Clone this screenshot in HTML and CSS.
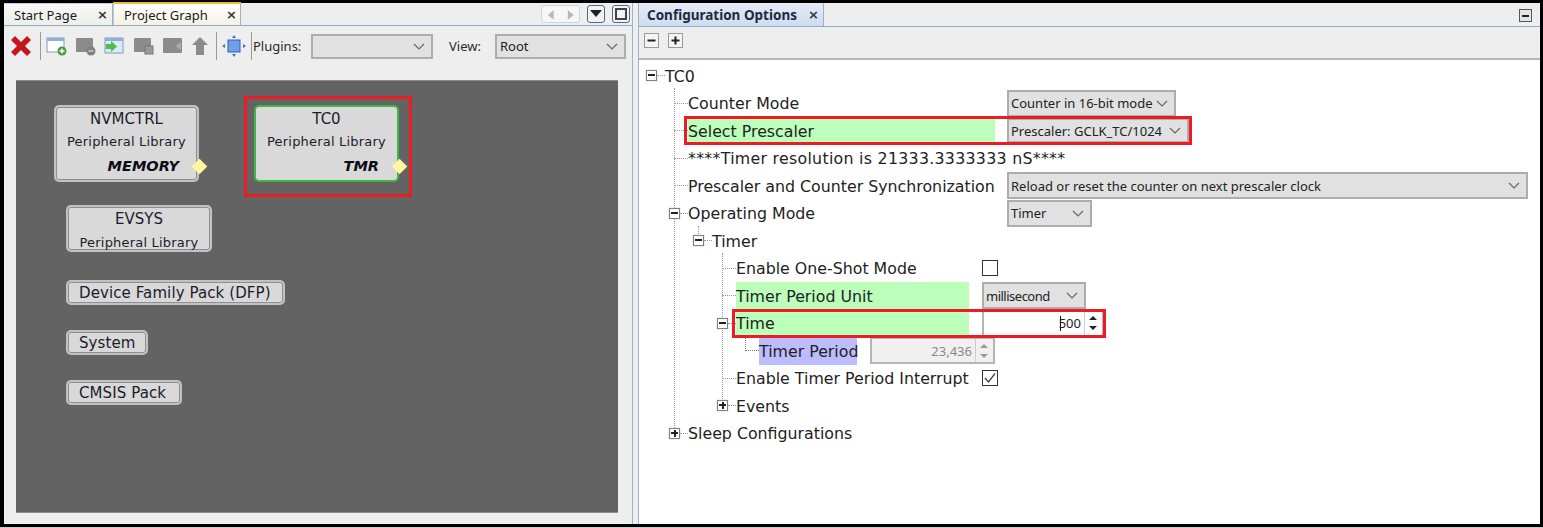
FILE: index.html
```html
<!DOCTYPE html>
<html lang="en">
<head>
  <meta charset="UTF-8">
  <title>Project Graph</title>
  <link rel="stylesheet" href="styles.css">
</head>
<body>
<div class="frame">

  <!-- left pane -->
  <section class="pane pane_left">
    <div class="tabbar">
      <div class="tab tab_start"><span>Start Page</span><b class="tab_x">×</b></div>
      <div class="tab tab_active"><span>Project Graph</span><b class="tab_x">×</b></div>
      <div class="tab_tools">
        <div class="nav_pair">
          <svg width="19" height="18" viewBox="0 0 19 18"><path d="M12 4v10l-6-5z" fill="#b4b8bd"/></svg>
          <svg width="19" height="18" viewBox="0 0 19 18"><path d="M7 4v10l6-5z" fill="#b4b8bd"/></svg>
        </div>
        <div class="win_btn"><svg width="12" height="8" viewBox="0 0 12 8"><path d="M0 0h12L6 7z" fill="#222"/></svg></div>
        <div class="win_btn"><svg width="12" height="12" viewBox="0 0 12 12"><rect x="1" y="1" width="10" height="10" fill="none" stroke="#444" stroke-width="2"/></svg></div>
      </div>
    </div>

    <div class="toolbar">
      <svg class="ico ico_x" width="24" height="24" viewBox="0 0 24 24"><path d="M2 6l4-4 6 6 6-6 4 4-6 6 6 6-4 4-6-6-6 6-4-4 6-6z" fill="#c4161c"/></svg>
      <i class="sep sep_a"></i>
      <svg class="ico" width="21" height="20" viewBox="0 0 21 20"><rect x="1" y="2" width="17" height="14" fill="#fff" stroke="#7a9cc8"/><rect x="1" y="2" width="17" height="3" fill="#8fb0dc"/><circle cx="16" cy="15" r="4.5" fill="#4f9a3c"/><path d="M13.5 15h5M16 12.500v5" stroke="#fff" stroke-width="1.500"/></svg>
      <svg class="ico" width="21" height="20" viewBox="0 0 21 20"><rect x="1" y="2" width="17" height="14" rx="1" fill="#8b8b8b"/><circle cx="16" cy="15" r="4.500" fill="#808080"/><path d="M13.500 15h5" stroke="#ccc" stroke-width="1.500"/></svg>
      <svg class="ico" width="21" height="20" viewBox="0 0 21 20"><rect x="1" y="2" width="18" height="15" fill="#dce9f8" stroke="#7a9cc8"/><rect x="1" y="2" width="18" height="3" fill="#8fb0dc"/><path d="M2 8h5V5l6 5.500L7 16v-3H2z" fill="#54b948"/></svg>
      <svg class="ico" width="21" height="20" viewBox="0 0 21 20"><rect x="1" y="2" width="17" height="14" rx="1" fill="#8b8b8b"/><rect x="12" y="10" width="8" height="8" fill="#999" stroke="#777"/></svg>
      <svg class="ico" width="21" height="20" viewBox="0 0 21 20"><rect x="1" y="2" width="19" height="15" rx="1" fill="#8b8b8b"/><path d="M19 6l-6 4 6 4" fill="#aaa"/></svg>
      <svg class="ico" width="18" height="20" viewBox="0 0 18 20"><path d="M9 1l8 8h-4v10H5V9H1z" fill="#8b8b8b"/></svg>
      <i class="sep sep_b"></i>
      <svg class="ico ico_fit" width="24" height="22" viewBox="0 0 24 22"><rect x="6" y="5" width="12" height="12" fill="#6f9fe8" stroke="#2f62b8"/><path d="M12 0l2 3h-4zM12 22l2-3h-4zM0 11l3-2v4zM24 11l-3-2v4z" fill="#3d74c9"/></svg>
      <i class="sep sep_c"></i>
      <label class="tool_label">Plugins:</label>
      <div class="combo combo_plugins"><span></span><svg width="12" height="7" viewBox="0 0 12 7"><path d="M1 1l5 5 5-5" fill="none" stroke="#666" stroke-width="1.200"/></svg></div>
      <label class="tool_label label_view">View:</label>
      <div class="combo combo_view"><span>Root</span><svg width="12" height="7" viewBox="0 0 12 7"><path d="M1 1l5 5 5-5" fill="none" stroke="#666" stroke-width="1.200"/></svg></div>
    </div>

    <!-- nodes sit freely on the graph canvas -->
    <div class="canvas">
      <div class="gnode gnode_big n_nvm">
        <p class="g_title">NVMCTRL</p><p class="g_sub">Peripheral Library</p><p class="g_tag">MEMORY</p><i class="port"></i>
      </div>
      <div class="gnode gnode_big n_tc0">
        <p class="g_title">TC0</p><p class="g_sub">Peripheral Library</p><p class="g_tag">TMR</p><i class="port"></i>
      </div>
      <div class="gnode n_evsys"><p class="g_title">EVSYS</p><p class="g_sub">Peripheral Library</p></div>
      <div class="gnode gnode_one n_dfp">Device Family Pack (DFP)</div>
      <div class="gnode gnode_one n_sys">System</div>
      <div class="gnode gnode_one n_cmsis">CMSIS Pack</div>
      <div class="red_box box_tc0"></div>
    </div>
  </section>

  <!-- right pane -->
  <section class="pane pane_right">
    <div class="tabbar tabbar_right">
      <div class="tab tab_config"><span>Configuration Options</span><b class="tab_x">×</b></div>
      <div class="min_btn"><i></i></div>
    </div>
    <div class="toolbar_right">
      <div class="tree_btn"><svg width="15" height="15" viewBox="0 0 15 15"><path d="M3.500 7.500h8" stroke="#222" stroke-width="2"/></svg></div>
      <div class="tree_btn"><svg width="15" height="15" viewBox="0 0 15 15"><path d="M3.500 7.500h8M7.500 3.500v8" stroke="#222" stroke-width="2"/></svg></div>
    </div>

    <div class="tree">
      <i class="guide guide_a"></i>
      <i class="guide guide_b"></i>
      <i class="guide guide_c"></i>

      <div class="row lv0"><span class="node"><i class="exp exp_minus"></i><i class="dash"></i></span><span class="text">TC0</span></div>

      <div class="row lv1"><span class="node"><i class="dash"></i></span><span class="label lab_wide">Counter Mode</span>
        <div class="combo tree_combo c_counter"><span>Counter in 16-bit mode</span><svg width="12" height="7" viewBox="0 0 12 7"><path d="M1 1l5 5 5-5" fill="none" stroke="#666" stroke-width="1.200"/></svg></div></div>

      <div class="row lv1"><span class="node"><i class="dash"></i></span><span class="label lab_wide hl_green">Select Prescaler</span>
        <div class="combo tree_combo c_presc"><span>Prescaler: GCLK_TC/1024</span><svg width="12" height="7" viewBox="0 0 12 7"><path d="M1 1l5 5 5-5" fill="none" stroke="#666" stroke-width="1.200"/></svg></div></div>

      <div class="row lv1"><span class="node"><i class="dash"></i></span><span class="text text_res">****Timer resolution is 21333.3333333 nS****</span></div>

      <div class="row lv1"><span class="node"><i class="dash"></i></span><span class="label lab_wide">Prescaler and Counter Synchronization</span>
        <div class="combo tree_combo c_reload"><span>Reload or reset the counter on next prescaler clock</span><svg width="12" height="7" viewBox="0 0 12 7"><path d="M1 1l5 5 5-5" fill="none" stroke="#666" stroke-width="1.200"/></svg></div></div>

      <div class="row lv1"><span class="node"><i class="exp exp_minus"></i><i class="dash"></i></span><span class="label lab_wide">Operating Mode</span>
        <div class="combo tree_combo c_timer"><span>Timer</span><svg width="12" height="7" viewBox="0 0 12 7"><path d="M1 1l5 5 5-5" fill="none" stroke="#666" stroke-width="1.200"/></svg></div></div>

      <div class="row lv2"><span class="node"><i class="exp exp_minus"></i><i class="dash"></i></span><span class="text">Timer</span></div>

      <div class="row lv3"><span class="node"><i class="dash"></i></span><span class="label lab_mid">Enable One-Shot Mode</span><i class="check"></i></div>

      <div class="row lv3"><span class="node"><i class="dash"></i></span><span class="label lab_mid hl_green">Timer Period Unit</span>
        <div class="combo tree_combo c_unit"><span>millisecond</span><svg width="12" height="7" viewBox="0 0 12 7"><path d="M1 1l5 5 5-5" fill="none" stroke="#666" stroke-width="1.200"/></svg></div></div>

      <div class="row lv3"><span class="node"><i class="exp exp_minus"></i><i class="dash"></i></span><span class="label lab_mid hl_green">Time</span>
        <div class="spin spin_time"><span class="spin_val"><i class="caret"></i>500</span>
          <span class="spin_btns"><svg width="16" height="10" viewBox="0 0 16 10"><path d="M8 3l4 4H4z" fill="#222"/></svg><svg width="16" height="10" viewBox="0 0 16 10"><path d="M8 7L4 3h8z" fill="#222"/></svg></span></div></div>

      <div class="row lv4"><span class="elbow"></span><span class="label lab_blue">Timer Period</span>
        <div class="spin spin_off"><span class="spin_val">23,436</span>
          <span class="spin_btns"><svg width="16" height="10" viewBox="0 0 16 10"><path d="M8 3l4 4H4z" fill="#999"/></svg><svg width="16" height="10" viewBox="0 0 16 10"><path d="M8 7L4 3h8z" fill="#999"/></svg></span></div></div>

      <div class="row lv3"><span class="node"><i class="dash"></i></span><span class="label lab_mid">Enable Timer Period Interrupt</span>
        <i class="check"><svg width="16" height="16" viewBox="0 0 16 16"><path d="M3 8l3.500 4L13 3.500" fill="none" stroke="#444" stroke-width="1.300"/></svg></i></div>

      <div class="row lv3"><span class="node"><i class="exp exp_plus"></i><i class="dash"></i></span><span class="text">Events</span></div>

      <div class="row lv1"><span class="node"><i class="exp exp_plus"></i><i class="dash"></i></span><span class="text">Sleep Configurations</span></div>

      <div class="red_box box_presc"></div>
      <div class="red_box box_time"></div>
    </div>
  </section>

</div>
</body>
</html>
```

FILE: styles.css
```css
*{
  box-sizing:border-box;
}

body,p{
  margin:0px; padding:0px;
}

body{
  width:1543px; height:528px; overflow:hidden; background:#000; color:#1a1a1a;
  border-bottom:1px solid #c3ccd6;
  font-family:"DejaVu Sans",sans-serif;
}

.frame{
  display:flex; height:521px; margin:3px 3px 0px 4px; background:#eeeeee;
}

.pane{
  display:flex; flex-direction:column; background:#eeeeee;
}

.pane_left{
  width:629px; border-right:1px solid #9fb2c9;
}

.pane_right{
  width:902px; margin-left:5px; border-left:1px solid #9fb2c9;
}

/* tabs */

.tabbar{
  display:flex; align-items:flex-end; flex:none; height:23px; border-bottom:1px solid #8fabc9;
  font-family:"Noto Sans",sans-serif; font-size:13px;
}

.tab{
  display:flex; align-items:center; justify-content:space-between; height:22px;
  border-right:1px solid #9fb2c9; padding-left:10px; padding-right:4px;
}

.tab_start{
  width:109px; background:linear-gradient(#f8f8f8,#ecefe9); border-top:1px solid #bcd0e6;
}

.tab_active{
  width:128px; height:23px; padding-right:3px; background:linear-gradient(#fff,#f5f1e2); border-top:2px solid #f4b63f; border-left:1px solid #bcc8d4;
}

.tab_x{
  font-family:"DejaVu Sans",sans-serif; font-size:13px; line-height:1; color:#333;
}

.tab_tools{
  display:flex; align-items:center; gap:7px; margin-left:auto; margin-right:2px; height:22px;
}

.nav_pair{
  display:flex; width:39px; height:18px; border:1px solid #c9d6e6; border-radius:3px; background:#f6f6f6;
}

.win_btn{
  display:flex; align-items:center; justify-content:center; width:18px; height:18px;
  border:1px solid #4a6a90; border-radius:3px; background:#f2f2f2;
}

.tabbar_right{
  justify-content:space-between; height:24px;
}

.tab_config{
  width:185px; height:23px; padding-left:8px; background:linear-gradient(#e4ebf7,#cfdcf0);
  font-weight:700; font-size:13.500px; color:#1c2a3c;
}

.min_btn{
  display:flex; align-items:center; justify-content:center; width:13px; height:13px;
  margin:0px 8px 4px 0px; border:1px solid #555; background:#e4e4e4;
}

.min_btn i{
  width:7px; height:2px; background:#222;
}

/* left toolbar */

.toolbar{
  display:flex; align-items:center; flex:none; height:54px; padding:0px 0px 14px 5px;
  font-family:"Noto Sans",sans-serif; font-size:13px;
}

.ico{
  flex:none; margin-right:8px;
}

.ico_x{
  margin-right:0px;
}

.sep{
  flex:none; width:1px; height:28px; background:#9a9a9a;
}

.sep_a{
  margin:0px 5px 0px 7px;
}

.sep_b{
  margin:0px 5px 0px -1px;
}

.ico_fit{
  margin-right:5px;
}

.sep_c{
  margin-right:1px;
}

.tool_label{
  width:58px; color:#2a2a2a;
}

.label_view{
  width:46px; margin-left:16px;
}

.combo{
  display:flex; align-items:center; justify-content:space-between;
  background:#e1e1e1; border:2px solid #adadad; padding:0px 6px 0px 3px;
  font-family:"Noto Sans",sans-serif; font-size:13px; color:#222; white-space:nowrap;
}

.combo_plugins{
  width:122px; height:25px;
}

.combo_view{
  width:131px; height:25px;
}

/* graph */

.canvas{
  position:relative; flex:none; width:602px; height:433px; margin-left:12px;
  background:#636363; border-top:1px solid #8c8c8c; border-bottom:1px solid #8c8c8c;
}

.gnode{
  position:absolute; background:#d9d9d9; border:2px solid #c2c2c2; border-radius:5px;
  box-shadow:inset 0 0 0 1px #8f8f8f; text-align:center; color:#1c1c2c;
}

.gnode_big{
  width:145px; height:77px;
}

.gnode_one{
  height:25px; line-height:23px; font-size:15px; letter-spacing:.1px; text-align:left; padding-left:11px;
}

.g_title{
  font-size:15px; line-height:22px; padding-top:1px;
}

.g_sub{
  font-size:13px; letter-spacing:.2px; line-height:24px;
}

.g_tag{
  font-size:14.500px; line-height:24px; font-weight:700; font-style:italic; text-align:right; padding-right:18px; color:#0c0c14;
}

.port{
  position:absolute; right:-8px; bottom:8.500px; width:11px; height:11px;
  background:#fff6a0; transform:rotate(45deg);
}

.n_nvm{ left:38px; top:24px; }
.n_tc0{ left:238px; top:24px; border-color:#3fb83f; box-shadow:none; }
.n_evsys{ left:50px; top:124px; width:146px; height:47px; }
.n_evsys .g_sub{ line-height:25px; }
.n_dfp{ left:50px; top:199px; width:219px; }
.n_sys{ left:50px; top:249px; width:82px; }
.n_cmsis{ left:50px; top:299px; width:116px; }

.red_box{
  position:absolute; border:3px solid #ed1c24;
}

.box_tc0{ left:228px; top:15px; width:168px; height:101px; }
.box_presc{ left:45px; top:56px; width:508px; height:29px; }
.box_time{ left:93px; top:249px; width:374px; height:29px; }

/* right toolbar */

.toolbar_right{
  display:flex; align-items:center; flex:none; gap:9px; height:33px; padding-left:5px; padding-bottom:4px;
  border-bottom:2px solid #b5b5b5;
}

.tree_btn{
  display:flex; width:15px; height:15px; border:1px solid #9a9a9a; background:#f4f4f4;
}

.tree_btn svg{
  margin:-1px;
}

/* tree */

.tree{
  position:relative; flex:1; background:#fff; padding-top:2px;
  font-size:15.800px; color:#222;
}

.row{
  display:flex; align-items:stretch; height:27.5px;
}

.lv0{ padding-left:7px; }
.lv1{ padding-left:30px; }
.lv2{ padding-left:54px; }
.lv3{ padding-left:78px; }
.lv4{ padding-left:106px; }

.node{
  display:flex; align-items:center; flex:none; width:19px; padding-left:5px;
}

.node:has(.exp){
  padding-left:0px;
}

.exp{
  position:relative; flex:none; width:11px; height:11px; border:1px solid #808080; background:#fff;
  box-shadow:0 0 1px #aaa;
}

.exp::before{
  content:""; position:absolute; left:1px; top:3px; width:7px; height:2px; background:#222;
}

.exp_plus::after{
  content:""; position:absolute; left:3.500px; top:1px; width:2px; height:7px; background:#222;
}

.dash{
  flex:1; border-top:1px dotted #999;
}

.text,.label{
  display:flex; align-items:center; padding-top:1px; white-space:nowrap;
}

.text_res{
  letter-spacing:.28px;
}

.label{
  flex:none;
}

.lab_wide{ width:307px; margin-right:12px; }
.lab_mid{ width:233px; margin-right:13px; }
.lab_blue{ width:98px; margin-right:13px; background:#bcbcff; }

.hl_green{
  background:#bbffbb;
}

.lv4 .elbow{
  flex:none; width:14px; height:14px; border-left:1px dotted #777; border-bottom:1px dotted #777;
}

.tree_combo{
  flex:none; height:27px; padding-left:2px;
}

.c_counter{ width:169px; }
.c_presc{ width:182px; height:25px; margin-top:1px; }
.c_reload{ width:521px; }
.c_timer{ width:85px; }
.c_unit{ width:104px; letter-spacing:-.5px; }

.check{
  flex:none; align-self:center; width:16px; height:16px; border:1px solid #333; background:#fff; display:flex;
}

.check svg{
  margin:-1px;
}

.spin{
  display:flex; flex:none; height:27px;
  font-family:"Noto Sans",sans-serif; font-size:13px; border:2px solid #b5b5b5;
}

.spin_time{
  width:122px; background:#fff; color:#222;
}

.spin_off{
  width:125px; background:#f0f0f0; color:#888;
}

.spin_val{
  flex:1; display:flex; align-items:center; justify-content:flex-end; padding-right:3px;
}

.caret{
  width:1px; height:15px; background:#111; margin-right:-2px;
}

.spin_btns{
  display:flex; flex-direction:column; justify-content:center; width:18px; border-left:1px solid #ccc;
}

.guide{
  position:absolute; border-left:1px dotted #999;
}

.guide_a{ left:35px; top:28px; height:340px; }
.guide_b{ left:59px; top:166px; height:12px; }
.guide_c{ left:83px; top:193px; height:150px; }
```
